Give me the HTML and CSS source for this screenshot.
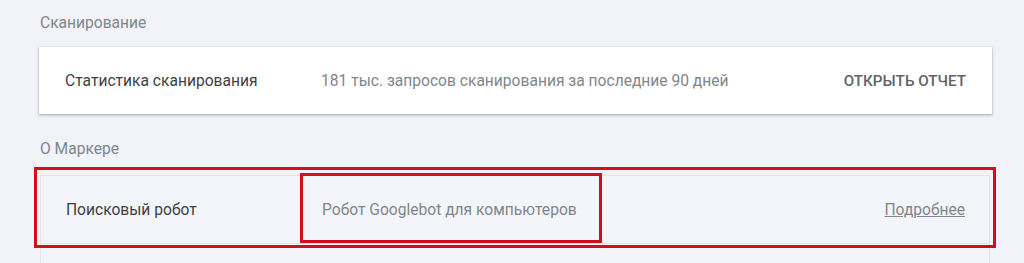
FILE: index.html
```html
<!DOCTYPE html>
<html lang="ru">
<head>
<meta charset="utf-8">
<title>Сканирование</title>
<link rel="stylesheet" href="styles.css">
</head>
<body>
<div class="page">
  <div class="section-title">Сканирование</div>
  <div class="card">
    <div class="row">
      <div class="label">Статистика сканирования</div>
      <div class="value">181 тыс. запросов сканирования за последние 90 дней</div>
      <div class="action">ОТКРЫТЬ ОТЧЕТ</div>
    </div>
  </div>
  <div class="section-title second">О Маркере</div>
  <div class="card flat">
    <div class="row row-flat">
      <div class="label">Поисковый робот</div>
      <div class="value value-marked">Робот Googlebot для компьютеров<span class="mark-inner"></span></div>
      <a class="more" href="#">Подробнее</a>
      <span class="mark-outer"></span>
    </div>
    <div class="row row-flat row-empty"></div>
  </div>
</div>
</body>
</html>
```
FILE: styles.css
```css
html, body {
  margin: 0;
  padding: 0;
  background: #f1f3f9;
  height: 263px;
  overflow: hidden;
}
body {
  font-family: Roboto, "Noto Sans", "Liberation Sans", sans-serif;
  font-size: 15.6px;
  color: #3c4043;
}
.page {
  padding: 13px 32px 0 39px;
}
.section-title {
  color: #80868b;
  font-size: 15.6px;
  line-height: 20px;
  padding-left: 1px;
  margin-bottom: 14px;
}
.section-title.second {
  margin-top: 25px;
  margin-bottom: 16px;
}
.card {
  background: #fff;
  box-shadow: 0 1px 2px rgba(60,64,67,0.28), 0 1px 3px 1px rgba(60,64,67,0.12);
}
.card.flat {
  background: #f3f5fa;
  box-shadow: none;
  border: 1px solid #e3e5ea;
  border-bottom: none;
  margin: 0 2px 0 1px;
}
.row {
  display: grid;
  grid-template-columns: 256px 1fr auto;
  align-items: center;
  height: 67px;
  padding: 0 26px;
  position: relative;
}
.row > .label, .row > .value, .row > .action {
  padding-top: 1px;
}
.row-flat {
  height: 67px;
  padding: 0 24px 0 25px;
  border-bottom: 1px solid #e3e5ea;
}
.row-flat > .label, .row-flat > .value {
  padding-top: 0;
}
.row-empty {
  border-bottom: none;
}
.label {
  color: #3c4043;
}
.value {
  color: #80868b;
}
.value-marked {
  position: relative;
}
.action {
  color: #5f6368;
  font-weight: 500;
  font-size: 15.2px;
}
.more {
  color: #80868b;
  text-decoration: underline;
}
.mark-outer {
  position: absolute;
  top: -9px;
  left: -7px;
  right: -7px;
  bottom: -5px;
  border: 3.5px solid #d0101c;
  box-sizing: border-box;
  pointer-events: none;
}
.mark-inner {
  position: absolute;
  top: -28px;
  bottom: -24px;
  left: -22px;
  width: 302px;
  border: 3.5px solid #d0101c;
  box-sizing: border-box;
}
```
